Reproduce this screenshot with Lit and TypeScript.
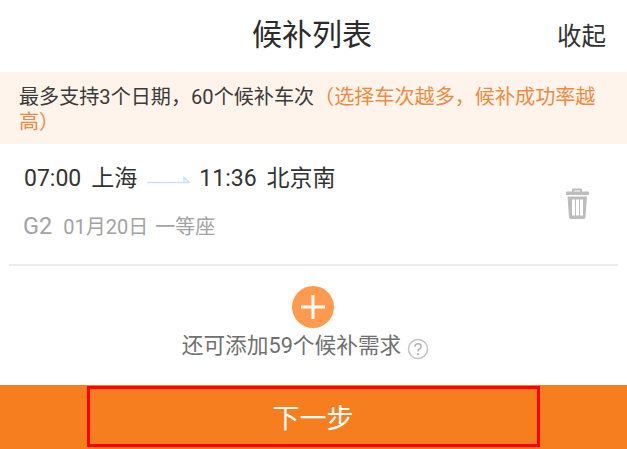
import { LitElement, html, css } from "lit";
import { customElement } from "lit/decorators.js";

@customElement("app-root")
export class AppRoot extends LitElement {
  static styles = css`
    :host {
      display: flex;
      flex-direction: column;
      width: 627px;
      height: 449px;
      overflow: hidden;
      background: #fff;
      color: #333;
      font-family: Roboto, "Noto Sans CJK SC", sans-serif;
    }
    .header {
      height: 72px;
      flex: none;
      display: grid;
      grid-template-columns: 1fr auto 1fr;
      align-items: center;
    }
    .title { grid-column: 2; font-size: 30px; line-height: 68px; height: 68px; margin: -2px 0 0 -3px; color: #2b2b2b; }
    .close { justify-self: end; padding: 2px 21px 0 0; font-size: 24.5px; line-height: 70px; color: #333; }
    .notice {
      height: 72px;
      flex: none;
      box-sizing: border-box;
      background: #fff4ec;
      padding: 13px 19px 0;
      font-size: 20.1px;
      line-height: 25px;
      color: #3a3a3a;
    }
    .notice span { color: #ef8a3e; }
    .item {
      height: 122px;
      flex: none;
      box-sizing: border-box;
      margin: 0 9px;
      padding: 18px 15px 0 15px;
      border-bottom: 2px solid #ececec;
      display: flex;
      justify-content: space-between;
    }
    .line1 {
      display: flex;
      align-items: center;
      font-size: 23px;
      line-height: 34px;
      color: #333;
    }
    .line1 .st { margin-left: 10px; }
    .arrow { margin: 2px 9px 0 10px; flex: none; display: block; }
    .line2 {
      display: flex;
      align-items: baseline;
      margin-top: 13px;
      color: #a3a3a3;
      font-size: 20px;
      line-height: 34px;
    }
    .train { font-size: 23.5px; margin: 0 11px 0 -1px; }
    .seat { margin-left: 7px; }
    .trash { margin: 26px 14px 0 0; display: block; flex: none; }
    .add {
      flex: 1;
      display: flex;
      flex-direction: column;
      align-items: center;
      padding: 20px 2px 0 0;
    }
    .plus { display: block; }
    .remain {
      display: flex;
      align-items: center;
      margin: 2px 14px 0 0;
      font-size: 21.7px;
      line-height: 32px;
      color: #707070;
    }
    .help { margin: 5px 0 0 6px; display: block; }
    .footer {
      height: 64px;
      flex: none;
      background: #f77e1f;
      display: flex;
      justify-content: center;
      align-items: flex-start;
      box-sizing: border-box;
      padding-top: 1px;
    }
    .next {
      width: 453px;
      height: 61px;
      box-sizing: border-box;
      border: 3px solid #f00;
      color: #fff;
      font-size: 27px;
      display: flex;
      align-items: center;
      justify-content: center;
      padding-right: 1px;
    }
  `;

  render() {
    return html`
      <div class="header">
        <div class="title">候补列表</div>
        <div class="close">收起</div>
      </div>
      <div class="notice">最多支持3个日期，60个候补车次<span>（选择车次越多，候补成功率越高）</span></div>
      <div class="item">
        <div>
          <div class="line1">
            <span>07:00</span><span class="st">上海</span>
            <svg class="arrow" width="43" height="8" viewBox="0 0 43 8">
              <path d="M0 6.5H42L37 1.5V6" fill="none" stroke="#cfe2f5" stroke-width="1.6"/>
            </svg>
            <span>11:36</span><span class="st">北京南</span>
          </div>
          <div class="line2">
            <span class="train">G2</span><span>01月20日</span><span class="seat">一等座</span>
          </div>
        </div>
        <svg class="trash" width="24" height="32" viewBox="0 0 24 32" fill="#bdbdbd">
          <path d="M7 3.5V1.5Q7 .5 8 .5H16Q17 .5 17 1.5V3.5H23Q24 3.5 24 4.5V7H1V4.5Q1 3.5 2 3.5ZM9 3.5H15V2.4H9Z" fill-rule="evenodd"/>
          <path d="M2.5 8.5H22L20.5 29Q20.4 31 18.5 31H6Q4.2 31 4 29ZM7 11.5V27.5H10V11.5ZM11 11.5V27.5H14V11.5ZM15 11.5V27.5H18V11.5Z" fill-rule="evenodd"/>
        </svg>
      </div>
      <div class="add">
        <svg class="plus" width="42" height="42" viewBox="0 0 42 42">
          <circle cx="21" cy="21" r="21" fill="#ff9a4e"/>
          <path d="M21 9V33M9 21H33" stroke="#fff" stroke-width="3"/>
        </svg>
        <div class="remain">
          <span>还可添加59个候补需求</span>
          <svg class="help" width="22" height="22" viewBox="0 0 22 22">
            <circle cx="11" cy="11" r="9.5" fill="none" stroke="#c4c4c4" stroke-width="1.6"/>
            <path d="M7.8 8.6Q8 5.8 11 5.8Q14.2 5.8 14.2 8.4Q14.2 10 12.4 11Q11 11.8 11 13.4" fill="none" stroke="#b5b5b5" stroke-width="1.6"/>
            <circle cx="11" cy="16" r="1.1" fill="#b5b5b5"/>
          </svg>
        </div>
      </div>
      <div class="footer"><div class="next">下一步</div></div>
    `;
  }
}
